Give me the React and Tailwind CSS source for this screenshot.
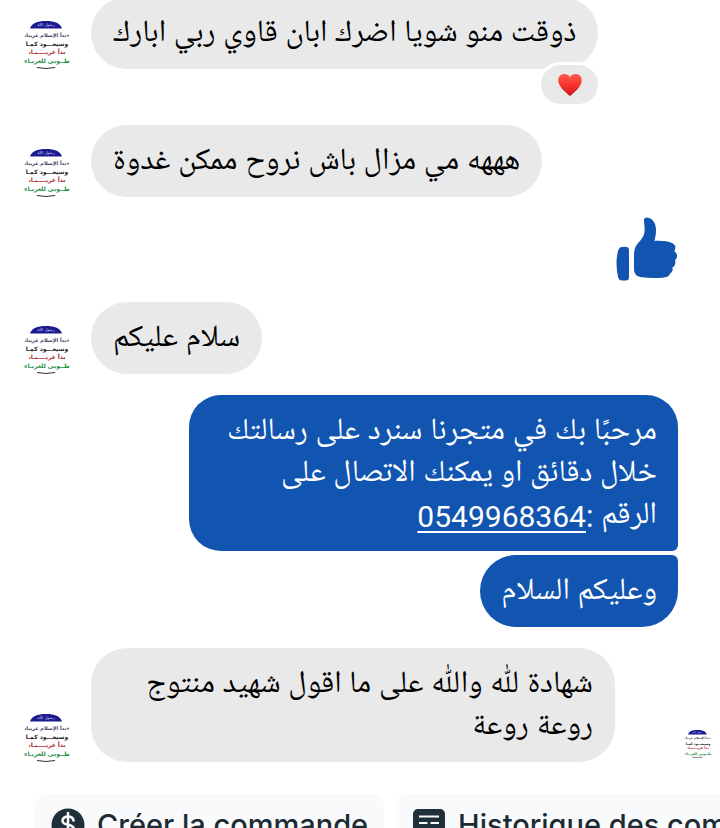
import { clsx } from 'clsx'

const AVATAR_LINES = [
  { text: '«بدأ الإسلام غريبا،', y: 16, color: '#3a3a62', size: 5 },
  { text: 'وسيعـــود كمـا', y: 25, color: '#1c1c1c', size: 6 },
  { text: 'بدأ غريــــبـا،', y: 33, color: '#b02a35', size: 6 },
  { text: 'طــوبى للغربـاء', y: 42, color: '#1f9048', size: 6 },
]

function Avatar({ small = false }) {
  return (
    <svg
      viewBox="0 0 48 48"
      role="img"
      aria-label="Photo de profil"
      className={clsx(
        "shrink-0 font-['DejaVu_Sans',sans-serif]",
        small ? 'w-7 h-7' : 'w-12 h-12',
      )}
    >
      <path d="M7 7.500C9 2 14 0 23 0S37 2 39 7.500Z" fill="#1b1b8f" />
      <text x="23" y="5" textAnchor="middle" fontSize="4" fill="#d5d5f2" direction="rtl">
        رسول الله
      </text>
      {AVATAR_LINES.map((line) => (
        <text
          key={line.y}
          x="24"
          y={line.y}
          direction="rtl"
          textAnchor="middle"
          fontSize={line.size}
          fontWeight="700"
          fill={line.color}
        >
          {line.text}
        </text>
      ))}
      <path d="M14 46.500Q23 48.500 32 46.500" fill="none" stroke="#333" strokeWidth="1" />
    </svg>
  )
}

function Heart() {
  return (
    <svg viewBox="0 0 24 24" role="img" aria-label="J’adore" className="w-6 h-6">
      <defs>
        <linearGradient id="heart" x1="0" y1="0" x2="0" y2="1">
          <stop offset="0" stopColor="#ff5a4f" />
          <stop offset="0.5" stopColor="#f8352f" />
          <stop offset="1" stopColor="#c9141b" />
        </linearGradient>
      </defs>
      <path
        d="M12 23C8 19.500 0.300 14 0.300 7.200C0.300 3 3 0.900 6 0.900C8.700 0.900 10.900 1.800 12 4.200C13.100 1.800 15.300 0.900 18 0.900C21 0.900 23.700 3 23.700 7.200C23.700 14 16 19.500 12 23Z"
        fill="url(#heart)"
      />
    </svg>
  )
}

function ThumbUp() {
  return (
    <svg viewBox="0 0 62 64" role="img" aria-label="J’aime" className="w-[62px] h-16" fill="#1155b0">
      <path d="M4 30.500Q7 29.500 11 30Q13 30.500 13 33V60Q13 63.500 10 63.500H6Q3 63.500 2 60Q-1 46 2 34Q2.500 31.500 4 30.500Z" />
      <path d="M28 4Q27.500 0.500 31 0.500C37 1 40 7 40 13C40 18 39 21 38.500 24C44 23.500 52 24 56 26C59 27.500 60 29.500 59 32.500C58.800 33.500 58.500 34 58 34.300C61 35.500 62.500 40 59 43.300C60 46 59 49.500 56.300 50.500C57.500 53 56 55.500 54 56.500C53.500 59 51 60.500 46 60.700C39 61.200 32 61.200 26 60.300C20.500 59.500 18 57 18 52V37C18 32 20 28 23 25C28 20 29 16 28.500 10Z" />
    </svg>
  )
}

function DollarIcon() {
  return (
    <svg viewBox="0 0 34 34" aria-hidden="true" className="w-[34px] h-[34px] shrink-0">
      <circle cx="17" cy="17" r="16.500" fill="#20303b" />
      <path
        d="M17 5V29M22.500 12.500C22 9.500 20 8.500 17 8.500C14 8.500 11.500 10 11.500 12.700C11.500 18.500 22.800 15.200 22.800 21C22.800 23.800 20.500 25.500 17 25.500C13.500 25.500 11.400 24 11 21"
        fill="none"
        stroke="#f8fafb"
        strokeWidth="2.600"
        strokeLinecap="round"
      />
    </svg>
  )
}

function TableIcon() {
  return (
    <svg viewBox="0 0 34 34" aria-hidden="true" className="w-[34px] h-[34px] shrink-0">
      <rect x="1" y="1" width="32" height="32" rx="5" fill="#20303b" />
      <path
        d="M7 8.500H27M7 15H15.500M18.500 15H27M7 21.500H15.500M18.500 21.500H27M7 28H15.500M18.500 28H27"
        stroke="#f8fafb"
        strokeWidth="2.200"
      />
    </svg>
  )
}

function Received({ children, className, reaction, seen }) {
  return (
    <div className={clsx('flex items-end pl-[23px] pr-2', className)}>
      <Avatar />
      <div className="relative ml-5 max-w-[524px] rounded-[36px] bg-[#e9e9e9] px-[22px] pt-[17px] pb-[13px] text-black">
        <p dir="rtl">{children}</p>
        {reaction && (
          <button
            type="button"
            className="absolute right-[-3px] -bottom-[38px] flex h-[45px] w-[63px] items-center justify-center rounded-full border-3 border-white bg-[#e9e9e9]"
          >
            {reaction}
          </button>
        )}
      </div>
      {seen && <div className="mb-1 ml-auto flex">{seen}</div>}
    </div>
  )
}

function Sent({ children, className }) {
  return (
    <div className="flex justify-end pr-[42px]">
      <div
        className={clsx(
          'max-w-[489px] bg-[#1155b0] px-[21px] pt-[17px] pb-[13px] text-white',
          className,
        )}
      >
        <p dir="rtl">{children}</p>
      </div>
    </div>
  )
}

function QuickAction({ icon, children }) {
  return (
    <button
      type="button"
      className="flex h-[62px] shrink-0 items-center gap-3 rounded-xl bg-[#f8fafb] px-4 font-['Inter'] text-[29px] font-medium whitespace-nowrap text-[#1c2b33]"
    >
      {icon}
      {children}
    </button>
  )
}

export default function App() {
  return (
    <main className="flex h-screen flex-col overflow-hidden bg-white font-['Roboto','Noto_Naskh_Arabic_UI','Noto_Naskh_Arabic','DejaVu_Sans_Condensed',sans-serif] text-[31px] leading-[42px]">
      <section className="-mt-[3px] shrink-0">
        <Received reaction={<Heart />}>ذوقت منو شويا اضرك ابان قاوي ربي ابارك</Received>
        <Received className="mt-14">هههه مي مزال باش نروح ممكن غدوة</Received>

        <div className="mt-5 flex justify-end pr-[42px]">
          <ThumbUp />
        </div>

        <Received className="mt-[21px]">سلام عليكم</Received>

        <div className="mt-[21px] flex flex-col gap-1">
          <Sent className="rounded-[32px] rounded-br-md">
            مرحبًا بك في متجرنا سنرد على رسالتك خلال دقائق او يمكنك الاتصال على
            <br />
            الرقم :
            <a
              href="tel:0549968364"
              className="text-[30px] leading-none underline decoration-2 underline-offset-4"
            >
              0549968364
            </a>
          </Sent>
          <Sent className="rounded-[36px] rounded-tr-md">وعليكم السلام</Sent>
        </div>

        <Received className="mt-[21px]" seen={<Avatar small />}>
          شهادة للّٰه واللّٰه على ما اقول شهيد منتوج روعة روعة
        </Received>
      </section>

      <nav className="mt-8 flex shrink-0 gap-3 pl-[35px]">
        <QuickAction icon={<DollarIcon />}>Créer la commande</QuickAction>
        <QuickAction icon={<TableIcon />}>Historique des commandes</QuickAction>
      </nav>
    </main>
  )
}
